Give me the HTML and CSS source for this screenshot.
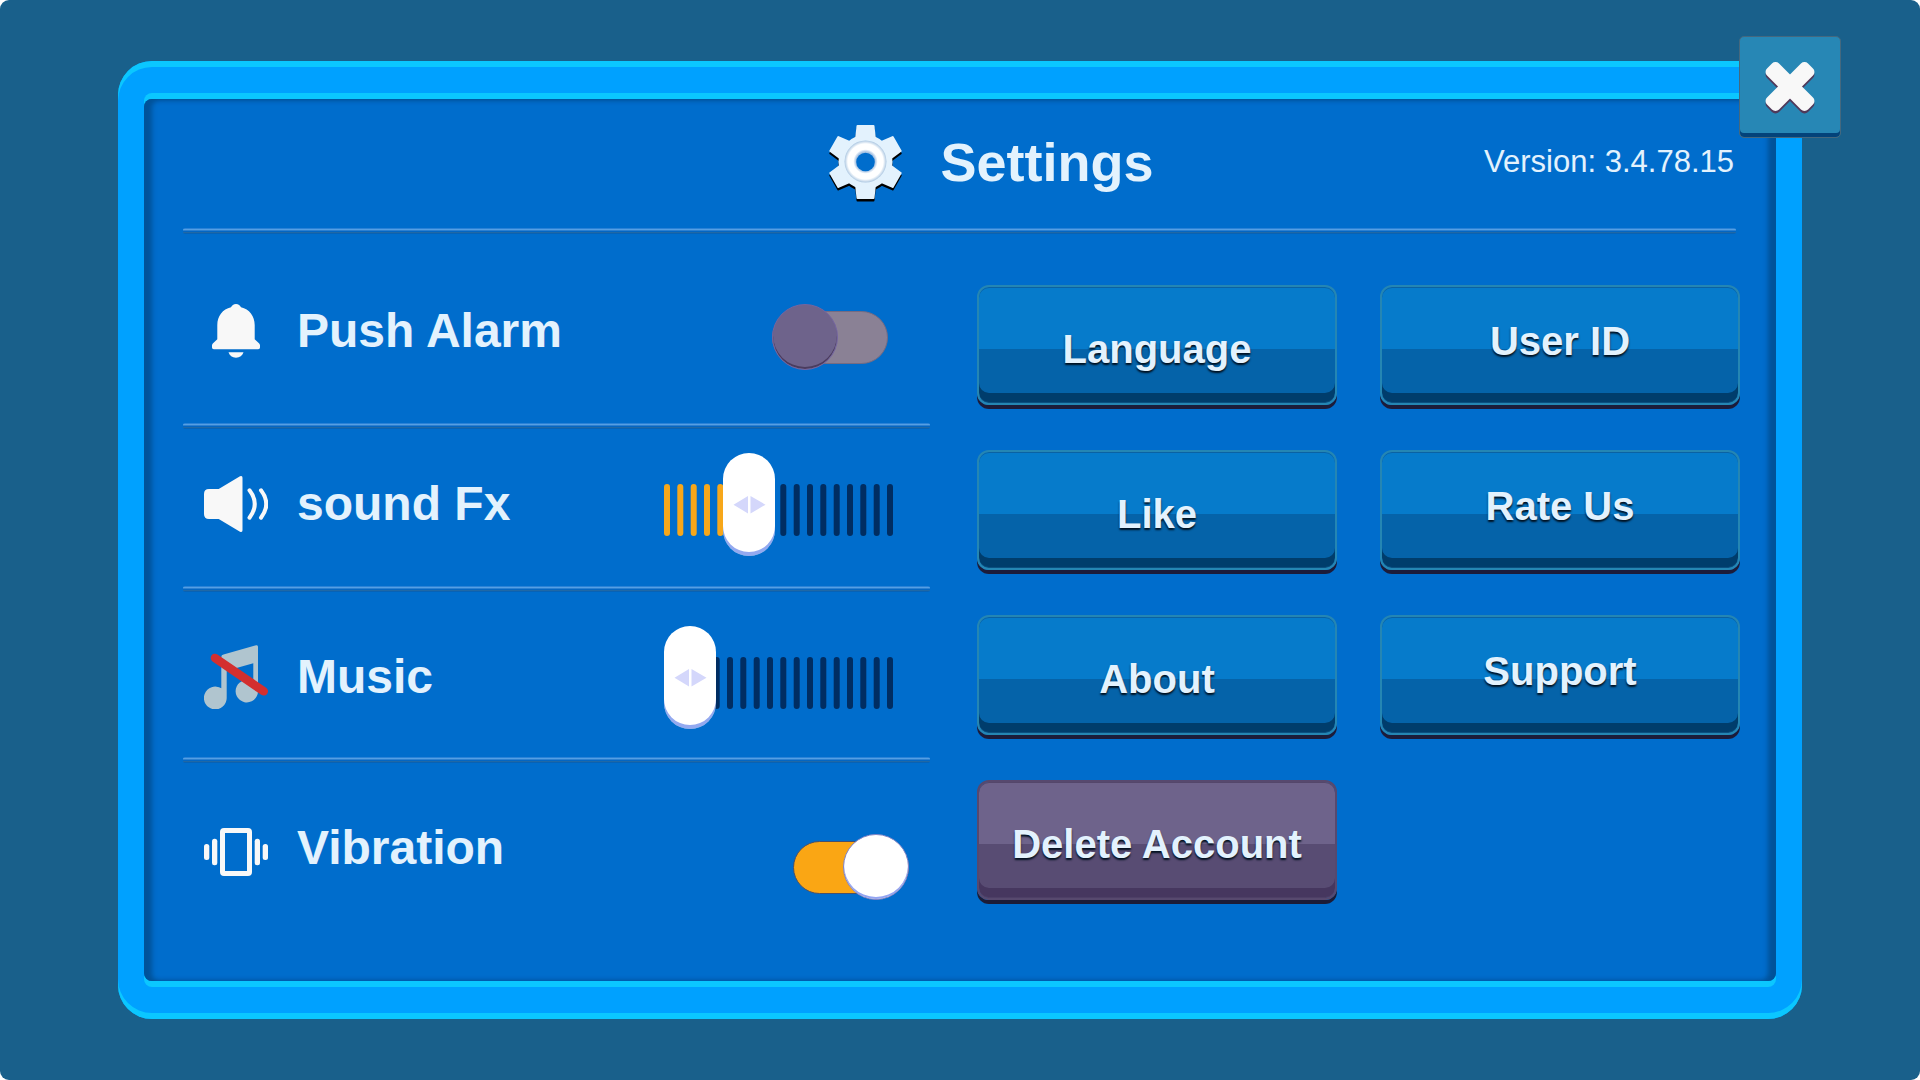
FILE: index.html
```html
<!DOCTYPE html>
<html lang="en">
<head>
<meta charset="utf-8">
<meta name="viewport" content="width=device-width, initial-scale=1">
<title>Settings</title>
<link rel="stylesheet" href="styles.css">
</head>
<body>
<main class="page">
  <section class="frame">
    <button class="close" type="button" aria-label="Close">
      <svg class="close-icon" viewBox="0 0 56 56" aria-hidden="true">
        <defs>
          <g id="cross">
            <rect x="-29" y="-8.500" width="58" height="17" rx="5" transform="rotate(45)"/>
            <rect x="-29" y="-8.500" width="58" height="17" rx="5" transform="rotate(-45)"/>
          </g>
        </defs>
        <use href="#cross" x="28" y="30" fill="#50395a"/>
        <use href="#cross" x="28" y="27.500" fill="#f8f8f8"/>
      </svg>
    </button>
    <div class="screen">
      <header class="header">
        <div class="title">
          <svg class="gear" viewBox="0 -2 73 80" aria-hidden="true">
            <defs>
              <path id="tooth" d="M-8-37H8Q9-37 9-36L10.300-24H-10.300L-9-36Q-9-37-8-37z"/>
              <g id="gear-body">
                <circle r="27"/>
                <use href="#tooth"/>
                <use href="#tooth" transform="rotate(60)"/>
                <use href="#tooth" transform="rotate(120)"/>
                <use href="#tooth" transform="rotate(180)"/>
                <use href="#tooth" transform="rotate(240)"/>
                <use href="#tooth" transform="rotate(300)"/>
              </g>
              <radialGradient id="ring">
                <stop offset="0.46" stop-color="#a9c4e4"/>
                <stop offset="0.58" stop-color="#fff"/>
                <stop offset="0.84" stop-color="#fff"/>
                <stop offset="1" stop-color="#adc8e2"/>
              </radialGradient>
            </defs>
            <use href="#gear-body" x="36.500" y="40.500" fill="#000"/>
            <use href="#gear-body" x="36.500" y="38" fill="#e3f2fd"/>
            <circle cx="36.500" cy="37.500" r="21" fill="url(#ring)"/>
            <circle cx="36.500" cy="38" r="9.300" fill="#006dcc"/>
          </svg>
          <h1>Settings</h1>
        </div>
        <p class="version">Version: 3.4.78.15</p>
      </header>
      <hr class="divider header-divider">
      <div class="content">
        <div class="options">
          <div class="row row-push">
            <svg class="icon" viewBox="0 0 64 64" fill="#f8f8f8" aria-hidden="true">
              <path d="M32 5c2.500 0 4 1.300 5 3.300C45.300 10.300 50.700 17 50.700 26v14.300l4.500 4.200q.8.900.8 2V48.500q0 1.800-1.800 1.800H9.800Q8 50.300 8 48.500V46.500q0-1.100.8-2l4.500-4.200V26c0-9 5.400-15.700 13.700-17.700 1-2 2.500-3.300 5-3.300zM24.500 53.300h15c-1 3.400-3.800 5.400-7.500 5.400s-6.500-2-7.500-5.400z"/>
            </svg>
            <label for="push">Push Alarm</label>
            <input class="toggle" type="checkbox" id="push">
          </div>
          <hr class="divider">
          <div class="row row-sound">
            <svg class="icon" viewBox="0 0 64 64" fill="#f8f8f8" aria-hidden="true">
              <path d="M5 17h9.700L36 4.300q2.500-1 2.500 1.500v52.400q0 2.500-2.500 1.500L14.700 47H5q-5 0-5-5V22q0-5 5-5z"/>
              <path d="M45.500 18.300q10.500 13.700 0 27.400M57 18.300q10.500 13.700 0 27.400" fill="none" stroke="#f8f8f8" stroke-width="4" stroke-linecap="round"/>
            </svg>
            <label for="sound">sound Fx</label>
            <div class="slider">
              <svg class="ticks" viewBox="0 0 229 104" aria-hidden="true">
                <path stroke="#002d62" d="M79.300 35v46M92.700 35v46M106 35v46M119.300 35v46M132.700 35v46M146 35v46M159.300 35v46M172.700 35v46M186 35v46M199.300 35v46M212.700 35v46M226 35v46"/>
                <path stroke="#f7a71a" d="M3 35v46M16.300 35v46M29.700 35v46M43 35v46M56.300 35v46"/>
              </svg>
              <input type="range" id="sound" min="0" max="15" value="5">
            </div>
          </div>
          <hr class="divider">
          <div class="row row-music">
            <svg class="icon" viewBox="0 0 64 64" fill="#b0c5cf" aria-hidden="true">
              <path d="M19.500 9.600L52.300.2Q54-.2 54 1.700V46.300a11.200 11.200 0 1 1-4.700-9.200V18.300L22.700 25.700V52.700a11.400 11.400 0 1 1-5.400-9.400V12q0-1.900 2.200-2.400z"/>
              <path d="M11 13L59.700 46.300" stroke="#d32f2f" stroke-width="8.600" stroke-linecap="round"/>
            </svg>
            <label for="music">Music</label>
            <div class="slider">
              <svg class="ticks" viewBox="0 0 229 104" aria-hidden="true">
                <path stroke="#002d62" d="M52.700 35v46M66 35v46M79.300 35v46M92.700 35v46M106 35v46M119.300 35v46M132.700 35v46M146 35v46M159.300 35v46M172.700 35v46M186 35v46M199.300 35v46M212.700 35v46M226 35v46"/>
              </svg>
              <input type="range" id="music" min="0" max="15" value="0">
            </div>
          </div>
          <hr class="divider">
          <div class="row row-vibration">
            <svg class="icon" viewBox="0 0 64 64" fill="#f8f8f8" aria-hidden="true">
              <rect x="18.500" y="14.500" width="27" height="43" rx="1.500" fill="none" stroke="#f8f8f8" stroke-width="5"/>
              <rect x="0" y="28" width="5.300" height="16" rx="2.500"/>
              <rect x="8" y="22.700" width="5.300" height="26.600" rx="2.500"/>
              <rect x="50.700" y="22.700" width="5.300" height="26.600" rx="2.500"/>
              <rect x="58.700" y="28" width="5.300" height="16" rx="2.500"/>
            </svg>
            <label for="vibration">Vibration</label>
            <input class="toggle" type="checkbox" id="vibration" checked>
          </div>
        </div>
        <div class="actions">
          <button class="action low" type="button">Language</button>
          <button class="action" type="button">User ID</button>
          <button class="action low" type="button">Like</button>
          <button class="action" type="button">Rate Us</button>
          <button class="action low" type="button">About</button>
          <button class="action" type="button">Support</button>
          <button class="action low danger" type="button">Delete Account</button>
        </div>
      </div>
    </div>
  </section>
</main>
</body>
</html>
```
FILE: styles.css
```css
*,
*::before,
*::after {
  box-sizing: border-box;
}

html {
  background: #fff;
}

body {
  margin: 0;
  font-family: "Liberation Sans", Arial, sans-serif;
  color: #e3f2fd;
}

button,
input {
  font: inherit;
  margin: 0;
}

h1,
p {
  margin: 0;
}

.page {
  display: flex;
  min-height: 100vh;
  padding: 61px 118px;
  border-radius: 9px;
  background: #19608b;
}

.frame {
  position: relative;
  display: flex;
  flex: 1;
  padding: 38px 26px;
  border-radius: 34px;
  background: #00a1ff;
  box-shadow: inset 0 6px #0bc7ff, inset 0 -6px #0bc7ff;
}

.screen {
  flex: 1;
  padding: 0 36px 0 39px;
  border-radius: 8px;
  background: #006dcc;
  box-shadow:
    0 -6px #0bc7ff,
    0 6px #0bc7ff,
    inset 8px 1px 5px #005299,
    inset -8px 0 5px #005299;
}

.close {
  position: absolute;
  top: -25px;
  right: -39px;
  display: grid;
  place-items: center;
  width: 102px;
  height: 102px;
  padding: 0;
  border: 1px solid #45687e;
  border-radius: 5px;
  background: #2787b5;
  box-shadow: inset 0 -4px #03437a;
  cursor: pointer;
}

.close-icon {
  width: 56px;
  height: 56px;
  overflow: visible;
}

/* Header */

.header {
  display: grid;
  grid-template-columns: 1fr auto 1fr;
  align-items: center;
  min-height: 129px;
  padding-right: 6px;
  padding-bottom: 3px;
}

.title {
  grid-column: 2;
  display: flex;
  align-items: center;
  gap: 38px;
  padding-left: 66px;
}

.gear {
  width: 73px;
  height: 80px;
}

h1 {
  font-size: 54px;
  line-height: 64px;
}

.version {
  justify-self: end;
  font-size: 31px;
  line-height: 40px;
}

.divider {
  height: 6px;
  margin: 0;
  border: 0;
  border-radius: 2px;
  background: linear-gradient(
    #2a82d7 1px,
    #559fe3 1px 2px,
    #2c80d1 2px 3px,
    #0466c2 3px 4px,
    #2068a5 4px 5px,
    #0862b4 5px
  );
}

.header-divider {
  margin-right: 4px;
}

.content {
  display: grid;
  grid-template-columns: 747fr 763fr;
  gap: 47px;
}

/* Option rows */

.row {
  display: grid;
  grid-template-columns: 64px 1fr auto;
  grid-template-rows: 104px;
  column-gap: 29px;
  align-items: center;
  padding-left: 21px;
}

.row-push {
  padding-top: 45px;
  padding-right: 42px;
  padding-bottom: 40px;
}

.row-sound {
  padding-top: 23px;
  padding-right: 37px;
  padding-bottom: 30px;
}

.row-music {
  padding-top: 33px;
  padding-right: 37px;
  padding-bottom: 28px;
}

.row-vibration {
  padding-top: 33px;
  padding-right: 21px;
  padding-bottom: 30px;
}

.row label {
  font-size: 48px;
  font-weight: 700;
  line-height: 56px;
}

.icon {
  width: 64px;
  height: 64px;
}

.toggle {
  appearance: none;
  display: grid;
  align-items: center;
  width: 116px;
  height: 66px;
  margin-top: 12px;
  cursor: pointer;
}

.toggle::before,
.toggle::after {
  content: "";
  grid-area: 1 / 1;
  border: 1px solid;
}

.toggle::before {
  height: 53px;
  border-color: #756b82;
  border-radius: 27px;
  background: #8a8195;
}

.toggle::after {
  width: 66px;
  height: 66px;
  border-color: #7465a0;
  border-radius: 50%;
  background: #6e638b;
  box-shadow: inset 0 -2px #4b3c5e;
}

.toggle:checked::before {
  border-color: #47506b;
  background: #faa614;
}

.toggle:checked::after {
  justify-self: end;
  border-color: #8083c4;
  background: #fff;
  box-shadow: inset 0 -2px #93a4f2;
}

.row-vibration .toggle {
  align-self: end;
}

.slider {
  display: grid;
  width: 229px;
  height: 104px;
}

.ticks,
.slider input {
  grid-area: 1 / 1;
  width: 100%;
  height: 100%;
}

.ticks {
  fill: none;
  stroke-width: 6px;
  stroke-linecap: round;
}

.slider input {
  appearance: none;
  z-index: 1;
  background: transparent;
  cursor: pointer;
}

.slider input::-webkit-slider-thumb {
  appearance: none;
  width: 52px;
  height: 103px;
  border: 0;
  border-radius: 26px;
  background: #fff url("data:image/svg+xml,%3Csvg xmlns='http://www.w3.org/2000/svg' width='52' height='103'%3E%3Cpath d='M25 43v17.500L10.500 51.700zM27.500 43v17.500L42.500 51.700z' fill='%23d4d7fb'/%3E%3C/svg%3E") no-repeat;
  box-shadow: inset 0 -4px #93a9f0;
}

/* Action buttons */

.actions {
  display: grid;
  grid-template-columns: 1fr 1fr;
  grid-auto-rows: 120px;
  align-content: start;
  gap: 45px 43px;
  padding-top: 51px;
}

.action {
  padding: 0 0 8px;
  border: 2px solid #2586b3;
  border-radius: 12px;
  background: linear-gradient(#067bcb 62px, #0563a9 62px) padding-box;
  box-shadow:
    inset 0 1px #0a62a3,
    inset 0 -1px #0b4f80,
    inset 0 -10px #003d6c,
    0 4px #1c1c3a;
  color: #e3f2fd;
  font-size: 40px;
  font-weight: 700;
  line-height: 48px;
  text-shadow: 0 2px 2px #00101f;
  cursor: pointer;
}

.action.low {
  padding: 8px 0 0;
}

.action.danger {
  border-color: #57496e;
  background: linear-gradient(#6e638b 62px, #584c73 62px) padding-box;
  box-shadow:
    inset 0 1px #54476b,
    inset 0 -1px #4d3f66,
    inset 0 -10px #46375f,
    0 4px #1c1c36;
}
```
